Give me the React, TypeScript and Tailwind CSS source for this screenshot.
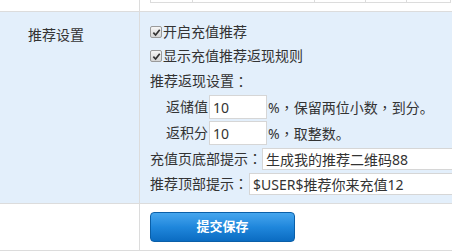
import React from 'react'

// full-width colon and comma sit centred in the reference, as in the TC face
function P({ c }: { c: string }) {
  return <span className="font-['Noto_Sans_CJK_TC',sans-serif]">{c}</span>
}

function Check({ label }: { label: string }) {
  return (
    <div className="flex h-[24px] items-center">
      <span className="mr-[1px] flex h-[12px] w-[12px] items-center justify-center rounded-[2px] border border-[#9a9a9a] bg-gradient-to-b from-[#f6f6f6] to-[#d6d6d6]">
        <svg viewBox="0 0 10 10" className="h-[9px] w-[9px]">
          <path d="M1.5 5.2 L4 7.8 L8.6 2" fill="none" stroke="#333" strokeWidth="1.9" />
        </svg>
      </span>
      <span>{label}</span>
    </div>
  )
}

export default function App() {
  const tops = [43, 122, 51, 41, 44]

  return (
    <div className="h-[252px] w-full overflow-hidden bg-white text-[14px] text-[#333] font-['Noto_Sans','Noto_Sans_CJK_SC',sans-serif]">
      {/* previous row */}
      <div className="flex h-[12px] border-b border-[#dcdcdc]">
        <div className="w-[140px] shrink-0 border-r border-[#dcdcdc]" />
        <div className="flex pl-[10px]">
          {tops.map((w, i) => (
            <div
              key={i}
              style={{ width: w }}
              className={`h-[3px] border-b border-r border-[#dcdcdc] ${i === 0 ? 'border-l' : ''}`}
            />
          ))}
        </div>
      </div>

      {/* 推荐设置 */}
      <div className="flex h-[192px] border-b border-[#dcdcdc] bg-[#e3effb]">
        <div className="w-[140px] shrink-0 border-r border-[#dcdcdc] pl-[28px] pt-[11px] leading-[24px]">
          推荐设置
        </div>
        <div className="min-w-0 flex-1 pl-[10px] pt-[8px] leading-none">
          <Check label="开启充值推荐" />
          <Check label="显示充值推荐返现规则" />
          <div className="flex h-[26px] items-center">
            推荐返现设置<P c="：" />
          </div>
          <div className="flex h-[26px] items-center pl-[16px]">
            <span>返储值</span>
            <input
              defaultValue="10"
              className="ml-[1px] h-[24px] w-[58px] border border-[#d6d6d6] bg-white px-[3px] text-[14px] text-[#333] outline-none"
            />
            <span className="ml-[1px] whitespace-nowrap">
              %<P c="，" />保留两位小数<P c="，" />到分。
            </span>
          </div>
          <div className="flex h-[26px] items-center pl-[16px]">
            <span>返积分</span>
            <input
              defaultValue="10"
              className="ml-[1px] h-[24px] w-[58px] border border-[#d6d6d6] bg-white px-[3px] text-[14px] text-[#333] outline-none"
            />
            <span className="ml-[1px] whitespace-nowrap">
              %<P c="，" />取整数。
            </span>
          </div>
          <div className="flex h-[25px] items-center">
            <span className="shrink-0 whitespace-nowrap">
              充值页底部提示<P c="：" />
            </span>
            <input
              defaultValue="生成我的推荐二维码88"
              className="h-[22px] w-[300px] shrink-0 border border-[#d6d6d6] bg-white px-[3px] text-[14px] text-[#333] outline-none"
            />
          </div>
          <div className="flex h-[25px] items-center">
            <span className="shrink-0 whitespace-nowrap">
              推荐顶部提示<P c="：" />
            </span>
            <input
              defaultValue="$USER$推荐你来充值12"
              className="ml-[1px] h-[22px] w-[300px] shrink-0 border border-[#d6d6d6] bg-white px-[3px] text-[14px] text-[#333] outline-none"
            />
          </div>
        </div>
      </div>

      {/* submit */}
      <div className="flex h-[47px] border-b border-[#dcdcdc]">
        <div className="w-[140px] shrink-0 border-r border-[#dcdcdc]" />
        <div className="pl-[10px] pt-[8px]">
          <button className="h-[30px] w-[145px] rounded-[4px] border border-[#0a5fa8] bg-gradient-to-b from-[#45a6ee] via-[#1f87dc] to-[#0a6cc2] text-[13px] font-bold text-white">
            提交保存
          </button>
        </div>
      </div>
    </div>
  )
}
